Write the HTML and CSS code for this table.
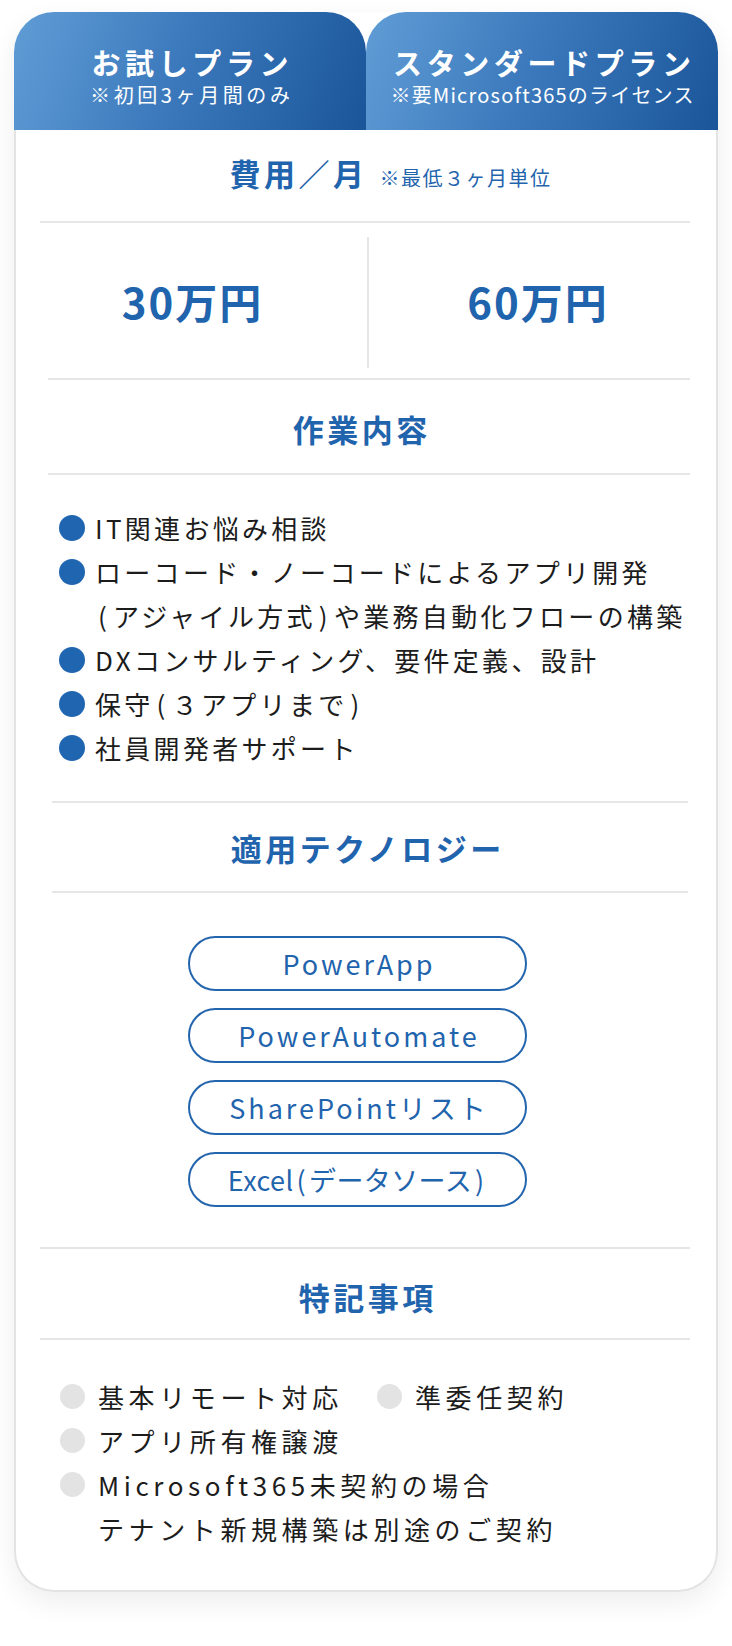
FILE: index.html
```html
<!DOCTYPE html>
<html lang="ja">
<head>
<meta charset="utf-8">
<title>プラン比較</title>
<link rel="stylesheet" href="styles.css">
</head>
<body>
<div class="page">
  <div class="card">
    <div class="tabs">
      <div class="tab">
        <div class="tab-title">お試しプラン</div>
        <div class="tab-sub sub-a">※初回3ヶ月間のみ</div>
      </div>
      <div class="tab">
        <div class="tab-title">スタンダードプラン</div>
        <div class="tab-sub sub-b">※要Microsoft365のライセンス</div>
      </div>
    </div>
    <div class="body">
      <div class="fee">
        <div class="fee-inner"><span class="fee-main">費用／月</span><span class="fee-note">※最低３ヶ月単位</span></div>
      </div>
      <div class="rule rule-a"></div>
      <div class="prices">
        <div class="price">30万円</div>
        <div class="vdiv"></div>
        <div class="price">60万円</div>
      </div>
      <div class="rule rule-b"></div>
      <h2 class="title title-work">作業内容</h2>
      <div class="rule rule-b"></div>
      <ul class="list">
        <li><span class="dot"></span><span class="txt">IT関連お悩み相談</span></li>
        <li><span class="dot"></span><span class="txt">ローコード・ノーコードによるアプリ開発<br><span class="pr">(</span>アジャイル方式<span class="pr">)</span>や業務自動化フローの構築</span></li>
        <li><span class="dot"></span><span class="txt">DXコンサルティング、要件定義、設計</span></li>
        <li><span class="dot"></span><span class="txt">保守<span class="pr">(</span>３アプリまで<span class="pr">)</span></span></li>
        <li><span class="dot"></span><span class="txt">社員開発者サポート</span></li>
      </ul>
      <div class="rule rule-c"></div>
      <h2 class="title title-tech">適用テクノロジー</h2>
      <div class="rule rule-c"></div>
      <div class="pills">
        <div class="pill">PowerApp</div>
        <div class="pill">PowerAutomate</div>
        <div class="pill">SharePointリスト</div>
        <div class="pill pill-tight">Excel<span class="pr">(</span>データソース<span class="pr">)</span></div>
      </div>
      <div class="rule rule-a"></div>
      <h2 class="title title-note">特記事項</h2>
      <div class="rule rule-a"></div>
      <ul class="notes">
        <li class="note-row">
          <span class="note note-first"><span class="gdot"></span><span class="ntxt">基本リモート対応</span></span>
          <span class="note"><span class="gdot"></span><span class="ntxt">準委任契約</span></span>
        </li>
        <li class="note-row"><span class="note"><span class="gdot"></span><span class="ntxt">アプリ所有権譲渡</span></span></li>
        <li class="note-row"><span class="note"><span class="gdot"></span><span class="ntxt">Microsoft365未契約の場合<br>テナント新規構築は別途のご契約</span></span></li>
      </ul>
    </div>
  </div>
</div>
</body>
</html>
```

FILE: styles.css
```css
* { box-sizing: border-box; margin: 0; padding: 0; }
html, body { background: #ffffff; }
body {
  font-family: "Noto Sans CJK JP", "Noto Sans", sans-serif;
  width: 732px;
  height: 1646px;
  overflow: hidden;
  color: #1c1c1c;
}
.page { padding: 12px 14px 0; }
.card {
  width: 704px;
  border-radius: 40px;
  background: #fff;
  box-shadow: 0 10px 28px rgba(0, 0, 0, 0.07);
}
.tabs { display: flex; height: 118px; }
.tab {
  flex: 1;
  border-radius: 40px 40px 0 0;
  background: linear-gradient(110deg, #609dd6 0%, #3d7abd 45%, #1a559a 100%);
  color: #fff;
  text-align: center;
  padding-top: 32px;
}
.tab-title {
  font-size: 29px;
  font-weight: 700;
  line-height: 36px;
  letter-spacing: 4.6px;
  padding-left: 4.6px;
}
.tab-sub { font-size: 20px; line-height: 24px; margin-top: 3px; }
.sub-a { letter-spacing: 3.6px; padding-left: 3.6px; }
.sub-b { letter-spacing: 1.2px; padding-left: 1.2px; }

.body {
  border: 2px solid #e3e3e3;
  border-top: none;
  border-radius: 0 0 40px 40px;
  padding-bottom: 39px;
}
.rule { height: 2px; background: #e6e6e6; }
.rule-a { margin: 0 26px 0 24px; }
.rule-b { margin: 0 26px 0 32px; }
.rule-c { margin: 0 28px 0 36px; }

.fee {
  height: 91px;
  display: flex;
  align-items: center;
  justify-content: center;
  padding-left: 49px;
}
.fee-inner { line-height: 40px; color: #1f64ad; }
.fee-main { font-size: 31px; font-weight: 700; letter-spacing: 3.5px; }
.fee-note { font-size: 20px; letter-spacing: 1.5px; margin-left: 12px; }

.prices {
  display: grid;
  grid-template-columns: 351px 2px 1fr;
  height: 155px;
  padding-right: 11px;
}
.price {
  display: flex;
  align-items: center;
  justify-content: center;
  font-size: 42px;
  font-weight: 700;
  letter-spacing: 2px;
  padding-left: 2px;
  color: #1f64ad;
}
.vdiv { background: #e6e6e6; margin: 14px 0 10px; }

.title {
  display: flex;
  align-items: center;
  justify-content: center;
  font-size: 31px;
  font-weight: 700;
  letter-spacing: 3.5px;
  padding-left: 3.5px;
  color: #1f64ad;
}
.title-work { height: 93px; padding-top: 3px; padding-right: 12px; }
.title-tech { height: 88px; }
.title-note { height: 89px; padding-top: 5px; }

.list {
  list-style: none;
  padding: 31px 0 31px 43px;
}
.list li { display: flex; align-items: flex-start; }
.dot {
  flex: 0 0 26px;
  width: 26px;
  height: 26px;
  border-radius: 50%;
  background: #1f65b0;
  margin: 9px 10px 0 0;
}
.txt {
  font-size: 26px;
  line-height: 44px;
  letter-spacing: 3.3px;
  color: #1c1c1c;
}
.pr { margin: 0 3px; }

.pills {
  display: flex;
  flex-direction: column;
  gap: 17px;
  padding: 43px 0 40px 172px;
}
.pill {
  width: 339px;
  height: 55px;
  border: 2px solid #2365ad;
  border-radius: 28px;
  display: flex;
  align-items: center;
  justify-content: center;
  font-size: 27px;
  letter-spacing: 3px;
  padding-left: 3px;
  color: #1f64ad;
}
.pill-tight { letter-spacing: 0.4px; padding-left: 0.4px; }

.notes {
  list-style: none;
  padding: 35px 0 0 44px;
}
.note-row { display: flex; }
.note { display: flex; align-items: flex-start; }
.note-first { width: 317px; }
.gdot {
  flex: 0 0 25px;
  width: 25px;
  height: 25px;
  border-radius: 50%;
  background: #e3e3e3;
  margin: 9px 13px 0 0;
}
.ntxt {
  font-size: 26px;
  line-height: 44px;
  letter-spacing: 4.6px;
  color: #1c1c1c;
}
```
